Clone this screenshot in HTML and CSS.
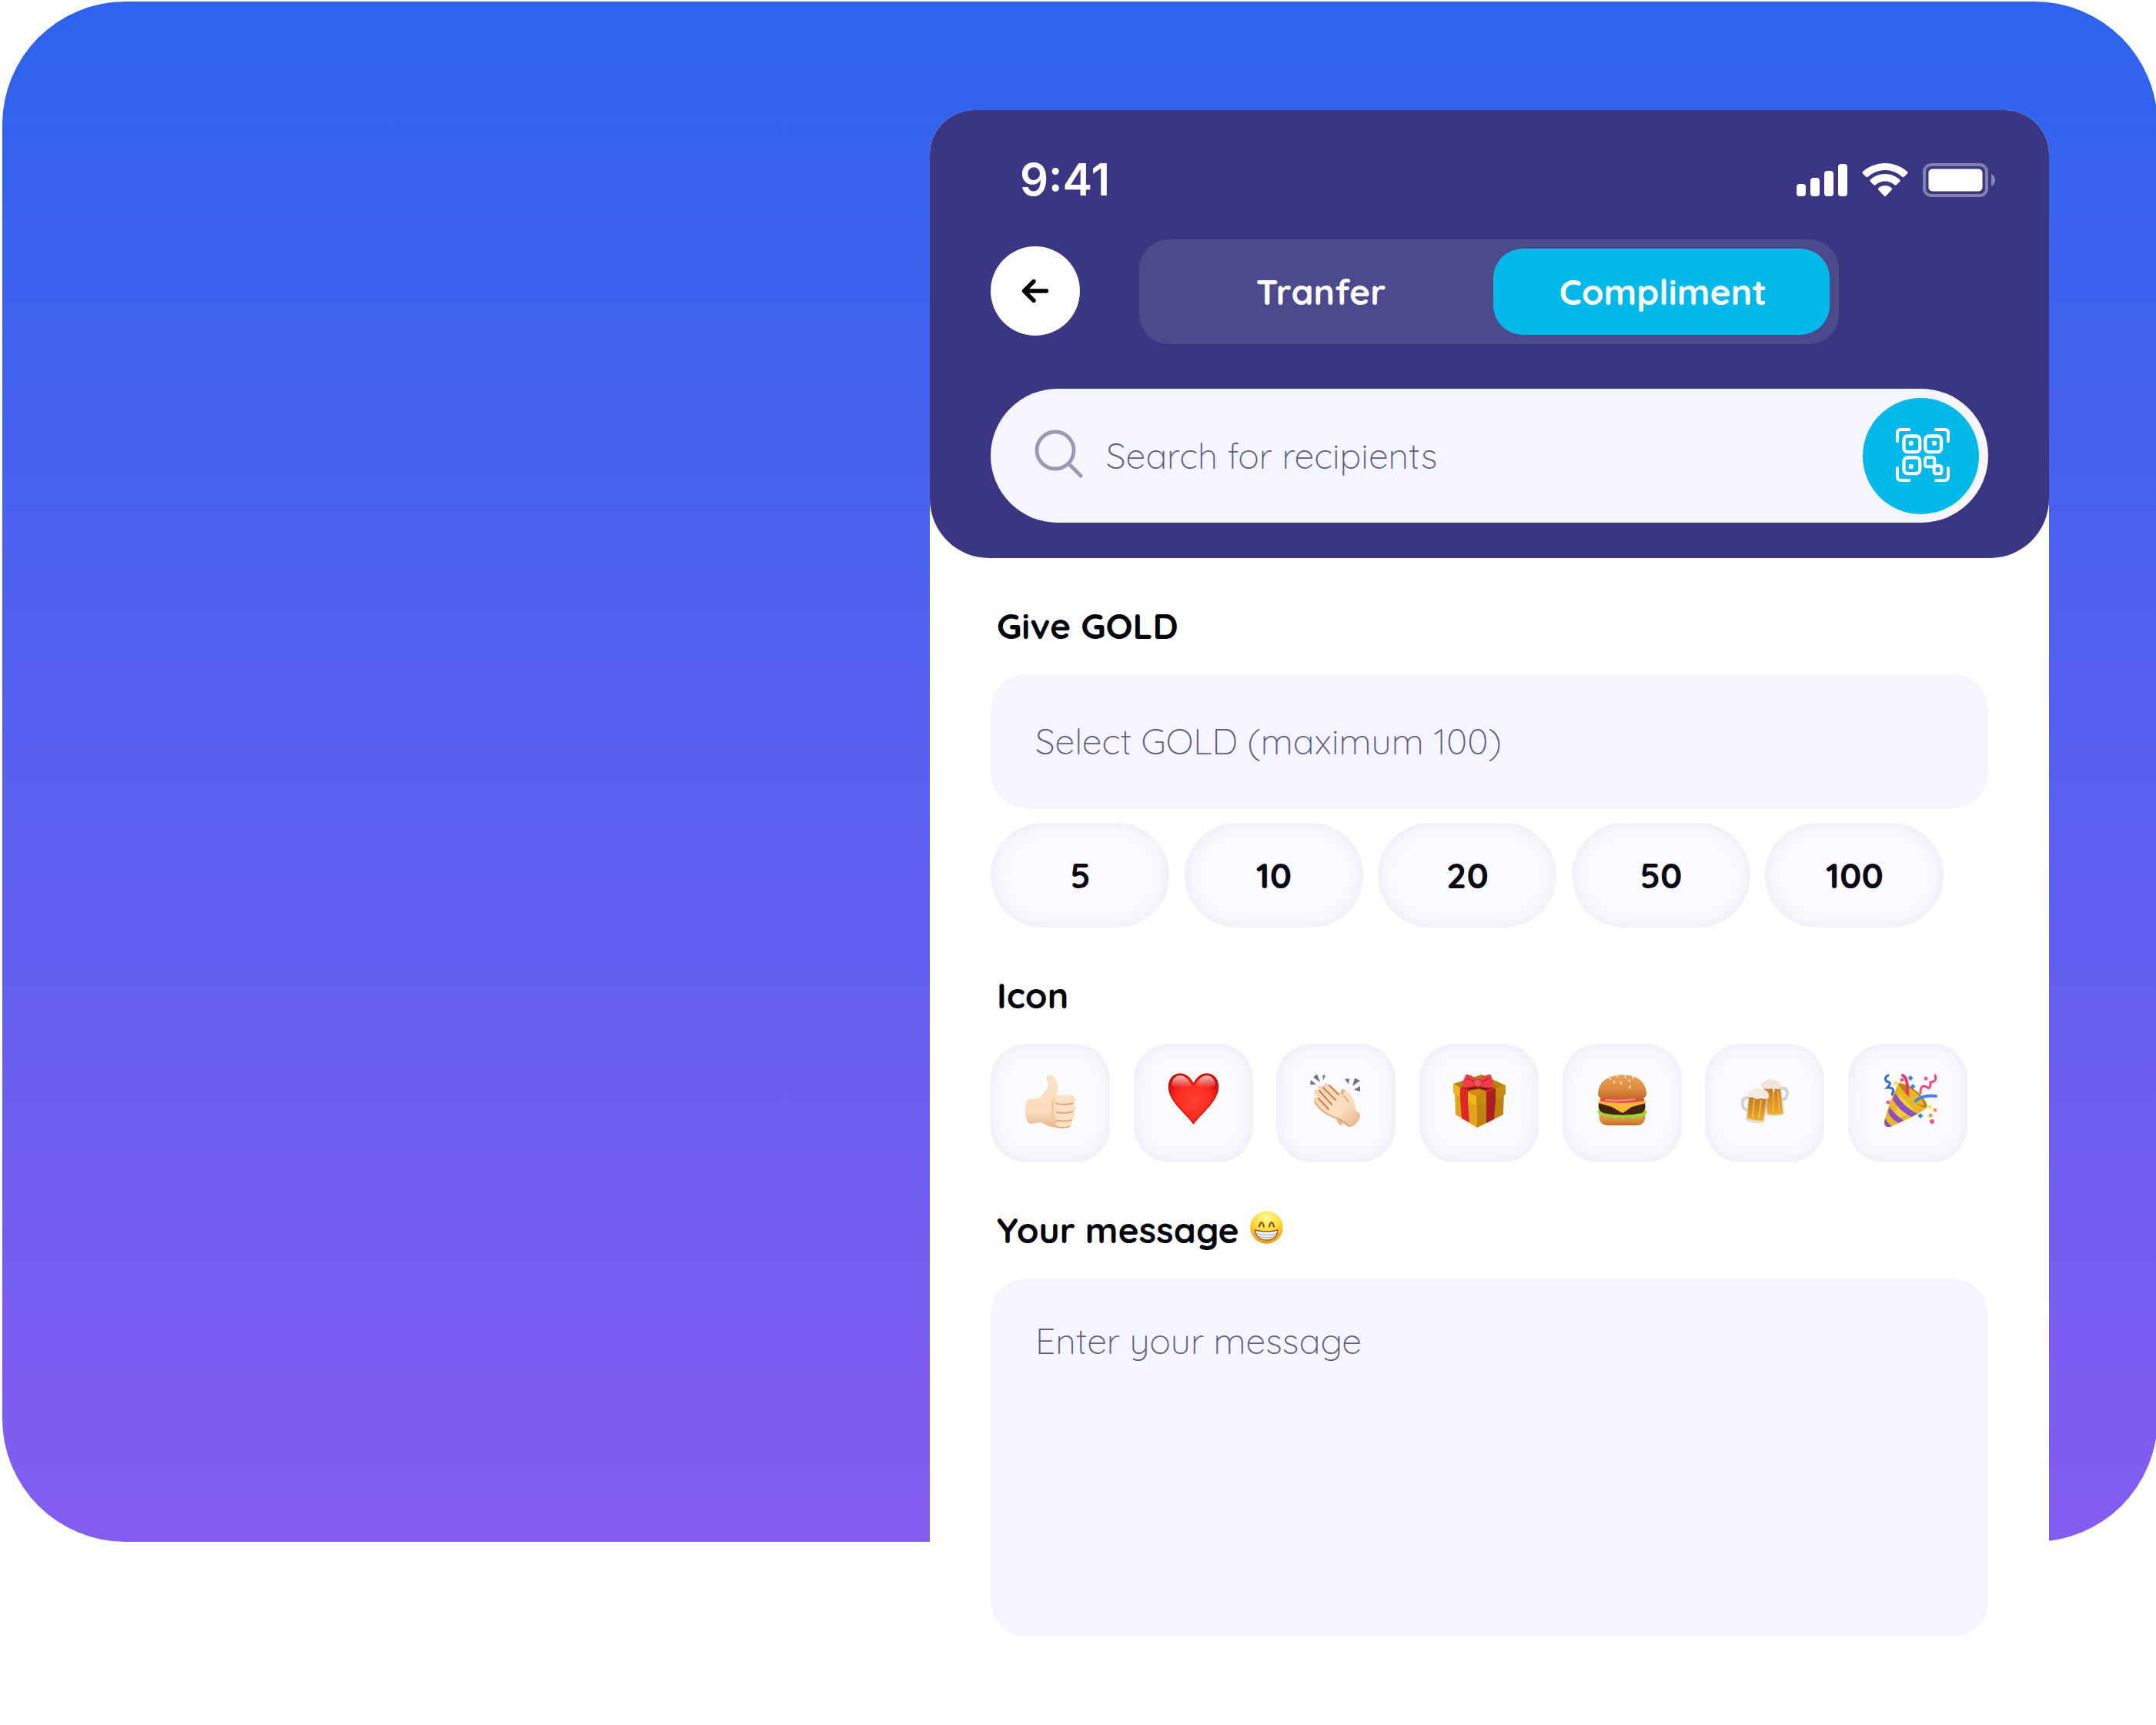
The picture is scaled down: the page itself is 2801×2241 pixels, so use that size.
FILE: index.html
```html
<!DOCTYPE html>
<html lang="en">
<head>
<meta charset="utf-8">
<title>Compliment</title>
<link rel="stylesheet" href="styles.css">
</head>
<body>
<main class="stage">
  <section class="phone">
    <header class="header">
      <div class="status">
        <span class="time">9:41</span>
        <svg class="status-icons" viewBox="2334 208 260 50" width="260" height="50">
          <g fill="#fff">
            <rect x="2334" y="239" width="12" height="16" rx="4"/>
            <rect x="2352" y="231" width="12" height="24" rx="4"/>
            <rect x="2370" y="222" width="12" height="33" rx="4"/>
            <rect x="2388" y="213" width="12" height="42" rx="4"/>
            <path d="M2449 212c11 0 21 4 29 11q1.500 1 0 2.500l-4 4q-1.500 1.300-3 0a33 33 0 0 0-44 0q-1.500 1.300-3 0l-4-4q-1.500-1.500 0-2.500c8-7 18-11 29-11z"/>
            <path d="M2449 226c7.500 0 14 2.800 19 7.300q1.500 1.200 0 2.600l-4 4q-1.500 1.300-3 .1a18 18 0 0 0-24 0q-1.500 1.200-3-.1l-4-4q-1.500-1.400 0-2.600c5-4.500 11.500-7.300 19-7.300z"/>
            <path d="M2449 241c3.300 0 6 1.100 8.300 2.900q1.500 1.300.3 2.800l-7.400 7.800q-1.200 1.200-2.400 0l-7.400-7.800q-1.200-1.500.3-2.800c2.300-1.800 5-2.900 8.300-2.900z"/>
            <rect x="2505.500" y="219.500" width="70" height="29" rx="5"/>
            <path d="M2587 226c3.500 1.500 5 4.500 5 8s-1.500 6.500-5 8z" opacity=".4"/>
          </g>
          <rect x="2500" y="214" width="81" height="40" rx="9" fill="none" stroke="#fff" stroke-width="4" opacity=".37"/>
        </svg>
      </div>
      <div class="nav">
        <button class="back" aria-label="Back">
          <svg viewBox="0 0 36 32" width="36" height="32" fill="none" stroke="#000" stroke-width="5.400" stroke-linecap="round" stroke-linejoin="round"><path d="M16 3.500L3.500 16L16 28.500M4 16H32.500"/></svg>
        </button>
        <div class="tabs">
          <span class="tab">Tranfer</span>
          <span class="tab tab-active">Compliment</span>
        </div>
      </div>
      <div class="search">
        <svg class="glass" viewBox="0 0 64 64" width="64" height="64" fill="none" stroke="#9a98b3" stroke-width="4.800" stroke-linecap="round"><circle cx="27" cy="27" r="24"/><path d="M44.500 44.500L60 60"/></svg>
        <span class="hint">Search for recipients</span>
        <span class="scan">
          <svg viewBox="0 0 210 210" width="70" height="70" fill="none" stroke="#fff" stroke-width="12" stroke-linecap="round">
            <path d="M6 52V20Q6 6 20 6H52M156 6H190Q204 6 204 20V52M204 156V190Q204 204 190 204H156M52 204H20Q6 204 6 190V156"/>
            <g stroke-width="13"><rect x="31.500" y="31.500" width="62" height="62" rx="14"/><rect x="115" y="31.500" width="62" height="62" rx="14"/><rect x="31.500" y="115.500" width="62" height="62" rx="14"/></g>
            <rect x="114" y="115" width="37" height="36" rx="7"/><rect x="149" y="148" width="29" height="30" rx="7"/>
            <g fill="#fff" stroke="none"><rect x="50" y="50" width="18" height="18" rx="6"/><rect x="141" y="50" width="18" height="18" rx="6"/><rect x="50" y="141" width="18" height="18" rx="6"/></g>
          </svg>
        </span>
      </div>
    </header>

    <div class="content">
      <h2 class="label">Give GOLD</h2>
      <div class="field"><span class="hint">Select GOLD (maximum 100)</span></div>
      <div class="chips">
        <span class="chip">5</span>
        <span class="chip">10</span>
        <span class="chip">20</span>
        <span class="chip">50</span>
        <span class="chip">100</span>
      </div>

      <h2 class="label">Icon</h2>
      <div class="tiles">
        <span class="tile">
          <svg viewBox="0 0 154 154">
            <defs><linearGradient id="skin" x1="0" y1="0" x2="0" y2="1"><stop offset="0" stop-color="#fbe2c6"/><stop offset=".7" stop-color="#f9dcbc"/><stop offset="1" stop-color="#e6b48c"/></linearGradient></defs>
            <path fill="url(#skin)" d="M50 71.500C55 71 58 73 63 70C69 65 74 59 74.500 53C74.500 49 71.500 45 72 43C73 40 80 40 83 44C88 50 88 58 86 67H104C111 67 111 76 107 79C112 81 111 88 107 90C110 94 108 99 104 100C106 105 104 109 98 109C86 110 74 108 66 102L52 104C43 103 43 72 50 71.500Z"/>
            <path d="M84 70Q78 77 81 86Q78 95 83 105" fill="none" stroke="#f0c7a2" stroke-width="3"/>
            <g fill="#fbe0c3"><rect x="83" y="67" width="27" height="11.500" rx="5.700"/><rect x="84" y="79" width="26.500" height="10.500" rx="5.200"/><rect x="84" y="90" width="24" height="10" rx="5"/><rect x="85" y="100.500" width="20" height="8.500" rx="4.200"/></g>
            <path d="M85 77.500Q95 80 107 77.500M86 89Q96 91 107 88.500M86 99.500Q95 101.500 105 99M87 108Q95 110 102 107.500" fill="none" stroke="#dba47c" stroke-width="1.800" stroke-linecap="round"/>
          </svg>
        </span>
        <span class="tile">
          <svg viewBox="0 0 154 154">
            <defs><radialGradient id="heart" cx=".5" cy=".55" r=".62"><stop offset="0" stop-color="#ff4133"/><stop offset=".6" stop-color="#fb2b20"/><stop offset="1" stop-color="#c80a06"/></radialGradient><linearGradient id="shine" x1="0" y1="0" x2="0" y2="1"><stop offset="0" stop-color="#fff" stop-opacity=".75"/><stop offset="1" stop-color="#fff" stop-opacity="0"/></linearGradient></defs>
            <path fill="url(#heart)" stroke="#cf1008" stroke-width="1.500" d="M77.500 103.500C70 92 45.500 75 45.500 56C45.500 36 69 32 77.500 53C86 32 109.500 36 109.500 56C109.500 75 85 92 77.500 103.500Z"/>
            <path fill="url(#shine)" d="M49 54C50 37 69 37 74 54Q60 60 49 54ZM106 54C105 37 86 37 81 54Q95 60 106 54Z"/>
          </svg>
        </span>
        <span class="tile">
          <svg viewBox="0 0 154 154">
            <defs><linearGradient id="palm" x1="0" y1="0" x2="1" y2="1"><stop offset="0" stop-color="#f6d3b0"/><stop offset=".6" stop-color="#fbdfc0"/><stop offset="1" stop-color="#e3ae85"/></linearGradient></defs>
            <g fill="#757575"><path d="M53 39.500L57 50L48 43.500ZM64 41L61 48L60.500 40.500ZM45 47L52 53L44 53ZM89 46L95 45L94 52.500ZM102 44.500L109 48L99 55ZM109 55V62L101 59.500Z"/></g>
            <path fill="#e9b78f" d="M84 60Q88 57 91 62L104 90L84 106Q80 104 78 98Z"/>
            <path fill="url(#palm)" d="M49 74C48 70 52 68 55 71L50 65C48 60 53 58 56 61L54 58C53 54 58 53 61 57C60 51 67 50 70 54L88 68C86 61 91 59 95 64C101 71 102 78 103 86L109 91C110 99 101 109 95 108C91 107 89 103 82 99C72 96 61 91 55 84Q49 78 49 74Z"/>
            <path fill="none" stroke="#c4855a" stroke-width="2" stroke-linecap="round" d="M61 57L77 73M56 61L72 79M55 71L68 85M69 54L81 66"/>
            <path fill="none" stroke="#d79c71" stroke-width="1.500" stroke-linecap="round" d="M50 75Q58 90 82 98Q90 102 94 107M88 68Q92 72 94 76"/>
          </svg>
        </span>
        <span class="tile">
          <svg viewBox="0 0 154 154">
            <path fill="#e2a31a" d="M46 64L75 78V109L47 92Z"/><path fill="#bd8413" d="M75 78L110 62L109 92L75 109Z"/>
            <path fill="#b5820d" d="M44 52L81 40L112 54L74 70Z"/>
            <path fill="#f0b51c" d="M44 52L74 68V81L44 64Z"/><path fill="#c68c12" d="M74 68L112 54V66L74 81Z"/>
            <path fill="#e1262b" d="M53 57L63 62V75L65 102L55 97L53 71Z"/><path fill="#ad1d22" d="M87 63L99 58V72L97 98L87 103Z"/>
            <path fill="#d3262c" d="M53 57L60 54L72 58L63 62ZM80 58L90 55L99 58L87 63Z"/>
            <path fill="#dd8616" d="M65 62L76 58L87 62L75 68Z"/>
            <path fill="#5e1010" opacity=".75" d="M56 56Q77 51 96 56Q87 62 77 58.500Q66 62 56 56Z"/>
            <path fill="#ee3d45" d="M75 46Q61 37 60 41Q54 53 58 57Q69 57 75 54ZM77 46Q92 37 93 41Q98 53 94 57Q84 58 77 54Z"/><path d="M62 45Q68 47 72 50M91 45Q85 47 81 50" stroke="#c2272e" stroke-width="1.500" fill="none"/><circle cx="76" cy="51" r="5" fill="#f4535a" stroke="#c72e34"/>
          </svg>
        </span>
        <span class="tile">
          <svg viewBox="0 0 154 154">
            <defs><linearGradient id="bun" x1="0" y1="0" x2="0" y2="1"><stop offset="0" stop-color="#e9a35a"/><stop offset=".6" stop-color="#dd8a3e"/><stop offset="1" stop-color="#c06c2a"/></linearGradient></defs>
            <path fill="url(#bun)" d="M48 90H107C109 101 104 106 96 106H59C51 106 46 101 48 90Z"/>
            <path fill="#8fdc2c" d="M46 86Q78 92 109 86Q111 92 105 92Q102 98 97 94Q92 100 86 95Q78 99 73 95Q67 99 63 94Q57 97 54 92Q44 93 46 86Z"/>
            <path fill="#47230f" d="M47 77H107Q109 87 103 90Q78 95 53 90Q45 87 47 77Z"/>
            <rect x="49" y="69" width="57" height="9" rx="4" fill="#e64a43"/><path d="M56 73Q75 75 94 72" stroke="#f79187" stroke-width="2" fill="none"/>
            <path fill="#fdb837" d="M46 74Q78 80 109 74L108 77L90 82L78 90L64 82L47 77Z"/>
            <path fill="url(#bun)" d="M46 65C47 48 60 40.500 78 40.500S108 48 109 65Q109 71 101 71H54Q46 71 46 65Z"/>
            <path d="M61 44L62 46M70 40.500L71 43M81 42L82 44M91 43L92 45M67 49V51M76 50V52M86 47L87 49M88 55L87 57" stroke="#f8dfaa" stroke-width="2" stroke-linecap="round"/>
          </svg>
        </span>
        <span class="tile">
          <svg viewBox="0 0 154 154">
            <defs><linearGradient id="beer" x1="0" y1="0" x2="0" y2="1"><stop offset="0" stop-color="#c0762c"/><stop offset=".45" stop-color="#d88b22"/><stop offset="1" stop-color="#f0b52c"/></linearGradient></defs>
            <path d="M97 58Q107 56 107 65Q106 73 99 73" fill="none" stroke="#d3d3cd" stroke-width="4"/>
            <path fill="url(#beer)" stroke="#d9d4c8" stroke-width="1.500" d="M76 56L98 54L102 91Q92 94 81 92Z"/>
            <path d="M89 62V89M95 62L97 88" stroke="#f7cc60" stroke-width="1.500" opacity=".7"/>
            <path fill="#efe6da" d="M74 57Q71 50 79 48Q86 44 93 48Q101 50 99 58Q94 60 91 58L90 65L87 58Q80 60 74 57Z"/>
            <path d="M58 70Q48 69 49 77Q48 86 57 86" fill="none" stroke="#d3d3cd" stroke-width="4"/>
            <path fill="url(#beer)" stroke="#d9d4c8" stroke-width="1.500" d="M57 67L81 70L76 102Q64 103 54 99Z"/>
            <path d="M64 72L62 96M73 73L70 97" stroke="#f7cc60" stroke-width="2" opacity=".7"/><path d="M54 98Q65 102 76 101" fill="none" stroke="#e3ddd0" stroke-width="3"/>
            <path fill="#f2ebe1" d="M57 69Q53 62 61 60Q67 56 74 59Q84 60 83 70Q78 73 73 71L67 72Q62 69 57 69Z"/>
          </svg>
        </span>
        <span class="tile">
          <svg viewBox="0 0 154 154">
            <path fill="#e4b62a" d="M65 52L102 83Q92 92 57 107Q47 111 47 102Q53 75 65 52Z"/>
            <path fill="#f8df58" d="M67 65L86 87L60 100Z" opacity=".55"/>
            <path fill="#8d4fc4" d="M61 64Q72 82 90 91L82 95Q65 86 58 72ZM54 82Q61 93 72 99L66 103Q57 99 52 89ZM48 97Q51 103 57 107Q48 111 47 102Z"/>
            <path fill="#b98415" d="M65 51Q78 51 92 64Q105 78 102 83Q94 84 80 70Q68 59 65 51Z"/><path fill="#e9b62c" d="M79 57Q93 64 99 80Q90 80 80 71Z"/>
            <g fill="none" stroke-linecap="round"><path d="M52 41Q46 44 50 49Q58 50 51 57Q62 56 57 66" stroke="#3268d5" stroke-width="3"/><path d="M71 41Q78 45 77 64" stroke="#ec3860" stroke-width="4"/><path d="M88 74Q98 66 114 68" stroke="#4183ee" stroke-width="4"/><path d="M113 41Q116 49 107 50Q107 61 102 56Q94 52 94 64" stroke="#ea4c75" stroke-width="3"/></g>
            <g fill="#3b82e8"><path d="M81 41L84.500 44.500L81 48L77.500 44.500ZM84 52L87.500 55.500L84 59L80.500 55.500ZM94 90L97.500 93.500L94 97L90.500 93.500Z"/></g>
            <g fill="#ee5b94"><circle cx="70" cy="47" r="2.500"/><circle cx="101" cy="45" r="2.500"/><circle cx="52" cy="76" r="2.500"/><circle cx="109" cy="101" r="3"/></g>
            <g fill="#f1a03a"><circle cx="107" cy="93" r="2.500"/><circle cx="113" cy="86" r="2.500"/></g><g fill="#f6e04a"><circle cx="62" cy="51" r="2.500"/><circle cx="106" cy="82" r="2.500"/></g>
          </svg>
        </span>
      </div>

      <h2 class="label">Your message
        <svg class="grin" viewBox="0 0 43 43" width="43" height="43">
          <defs><radialGradient id="face" cx=".5" cy=".2" r=".85"><stop offset="0" stop-color="#fffa96"/><stop offset=".5" stop-color="#fed83c"/><stop offset=".85" stop-color="#f8a515"/><stop offset="1" stop-color="#ee8a0c"/></radialGradient></defs>
          <circle cx="21.500" cy="21.500" r="21.200" fill="url(#face)"/>
          <path d="M12 20.500Q15 9.500 18 20.500M25 20.500Q28 9.500 31 20.500" fill="none" stroke="#82500f" stroke-width="2.200" stroke-linecap="round"/>
          <path d="M6.500 25Q21.500 29 36 25Q35 38 21.500 38T6.500 25Z" fill="#f3f5f8" stroke="#86582a" stroke-width="1.300"/>
          <path d="M8 29.500Q21.500 33 35 29.500M10.500 33Q21.500 36.500 32.500 33" fill="none" stroke="#9aa1ac" stroke-width="1"/>
        </svg>
      </h2>
      <div class="field message"><span class="hint">Enter your message</span></div>
    </div>
  </section>
</main>
</body>
</html>
```
FILE: styles.css
```css
* {
  box-sizing: border-box;
}

body {
  margin: 0;
  height: 2241px;
  overflow: hidden;
  background: #fff;
  font-family: Quicksand, Lato, "Open Sans", sans-serif;
  font-size: 46.3px;
  line-height: 56px;
}

.stage {
  display: flex;
  align-items: flex-start;
  width: 2800px;
  height: 2001px;
  margin: 2px 0 0 3px;
  padding: 141px 0 0 1205px;
  border-radius: 160px;
  background: linear-gradient(180deg, #2d63ee 0%, #845cf0 100%);
}

.phone {
  flex: none;
  width: 1454px;
  height: 2098px;
  border-radius: 58px 58px 0 0;
  background: #fff;
}

.header {
  height: 582px;
  padding: 65px 79px 0;
  border-radius: 58px 58px 77px 77px;
  background: #3a3681;
}

.status {
  display: flex;
  justify-content: space-between;
  height: 50px;
  margin-right: -11px;
  padding-left: 38px;
}

.time {
  color: #fff;
  font: 600 58px/50px Inter, sans-serif;
}

.nav {
  display: flex;
  align-items: center;
  gap: 77px;
  height: 136px;
  margin-top: 53px;
}

.back {
  display: flex;
  align-items: center;
  justify-content: center;
  width: 116px;
  height: 116px;
  margin: 0 0 3px;
  padding: 0;
  border: 0;
  border-radius: 50%;
  background: #fff;
}

.tabs {
  display: grid;
  grid-template-columns: 1fr 437px;
  width: 909px;
  height: 136px;
  padding: 12px;
  border-radius: 38px;
  background: #4d498d;
}

.tab {
  display: flex;
  align-items: center;
  justify-content: center;
  border-radius: 38px;
  color: #fff;
  font-weight: 700;
}

.tab-active {
  padding-left: 4px;
  background: #00b9e8;
}

.search {
  display: flex;
  align-items: center;
  height: 174px;
  margin-top: 58px;
  padding: 0 12px 0 57px;
  border-radius: 87px;
  background: #f5f5ff;
}

.glass {
  margin-right: 29px;
  margin-bottom: 4px;
}

.hint {
  color: #5f5c86;
  font-weight: 300;
  white-space: nowrap;
}

.scan {
  display: flex;
  align-items: center;
  justify-content: center;
  width: 151px;
  height: 151px;
  margin-left: auto;
  padding: 0 0 2px 4px;
  border-radius: 50%;
  background: #00b9e8;
}

.content {
  padding: 0 79px;
}

.label {
  display: flex;
  align-items: center;
  height: 56px;
  margin: 60px 0 35px;
  padding-left: 8px;
  color: #05050c;
  font-size: 46.3px;
  font-weight: 700;
}

.field {
  display: flex;
  align-items: center;
  height: 174px;
  padding: 0 58px;
  border-radius: 46px;
  background: #f5f5ff;
}

.chips {
  display: flex;
  gap: 19.500px;
  margin-top: 19px;
}

.chip {
  display: flex;
  align-items: center;
  justify-content: center;
  width: 232px;
  height: 136px;
  padding-left: 1px;
  border-radius: 68px;
  background: #fafaff;
  box-shadow: inset 0 0 28px rgba(30, 20, 80, 0.07);
  color: #0a0914;
  font-weight: 700;
}

.tiles {
  display: flex;
  gap: 30.700px;
}

.tile {
  width: 155px;
  height: 154px;
  border-radius: 46px;
  background: #fafaff;
  box-shadow: inset 0 0 28px rgba(30, 20, 80, 0.07);
}

.tile svg {
  display: block;
  width: 154px;
  height: 154px;
}

.grin {
  margin: 0 0 7px 14px;
}

.message {
  align-items: flex-start;
  height: 465px;
  padding-top: 53px;
}
```
